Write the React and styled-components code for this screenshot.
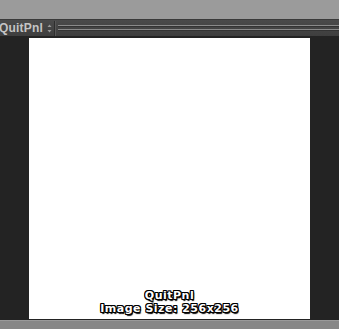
import styled, { createGlobalStyle } from "styled-components";

const GlobalStyle = createGlobalStyle`
  html, body {
    margin: 0;
    padding: 0;
    background: #232323;
  }
`;

function App() {
  return (
    <>
      <GlobalStyle />
      <Page>
        <TopBar />
        <Toolbar>
          <Title>QuitPnl</Title>
          <Spinner>
            <svg width="5" height="9" viewBox="0 0 5 9">
              <path d="M2.5 0.5 L4.5 3 L0.5 3 Z" fill="#9a9a9a" />
              <path d="M2.5 8.5 L4.5 6 L0.5 6 Z" fill="#9a9a9a" />
            </svg>
          </Spinner>
          <Divider />
          <Grip>
            <GripLine />
            <GripLine />
          </Grip>
        </Toolbar>
        <Canvas>
          <Sheet>
            <Caption>QuitPnl</Caption>
            <Caption>Image Size: 256x256</Caption>
          </Sheet>
        </Canvas>
        <BottomBar />
      </Page>
    </>
  );
}

const Page = styled.div`
  width: 339px;
  height: 329px;
  display: flex;
  flex-direction: column;
  overflow: hidden;
`;

const TopBar = styled.div`
  height: 19px;
  background: #9b9b9b;
  flex-shrink: 0;
`;

const Toolbar = styled.div`
  height: 17px;
  flex-shrink: 0;
  display: flex;
  align-items: center;
  background: linear-gradient(#4a4a4a, #3e3e3e);
  border-top: 1px solid #3a3a3a;
  box-sizing: border-box;
`;

const Title = styled.span`
  font-family: "Liberation Sans", Arial, sans-serif;
  font-weight: bold;
  font-size: 12px;
  letter-spacing: 0.2px;
  color: #c4c4c4;
  margin-left: -1px;
`;

const Spinner = styled.span`
  display: flex;
  margin-left: 4px;
`;

const Divider = styled.span`
  width: 1px;
  height: 15px;
  background: #2e2e2e;
  border-right: 1px solid #575757;
  margin-left: 2px;
`;

const Grip = styled.div`
  flex: 1;
  display: flex;
  flex-direction: column;
  gap: 2px;
  margin-left: 2px;
`;

const GripLine = styled.div`
  height: 1px;
  background: #8a8a8a;
  border-bottom: 1px solid #333;
`;

const Canvas = styled.div`
  flex: 1;
  display: flex;
  background: #232323;
  padding: 2px 29px 1px;
`;

const Sheet = styled.div`
  flex: 1;
  background: #fff;
  display: flex;
  flex-direction: column;
  justify-content: flex-end;
  align-items: center;
  padding-bottom: 4px;
`;

const Caption = styled.div`
  font-family: "DejaVu Sans", Verdana, sans-serif;
  font-weight: bold;
  font-size: 11px;
  letter-spacing: 0.5px;
  line-height: 13px;
  color: #fff;
  text-shadow: -1px -1px 0 #000, 1px -1px 0 #000, -1px 1px 0 #000,
    1px 1px 0 #000, 0 1px 0 #000, 0 -1px 0 #000, 1px 0 0 #000, -1px 0 0 #000,
    1px 2px 1px #000;
`;

const BottomBar = styled.div`
  height: 8px;
  flex-shrink: 0;
  background: #878787;
  border-top: 1px solid #9a9a9a;
`;

export default App;
